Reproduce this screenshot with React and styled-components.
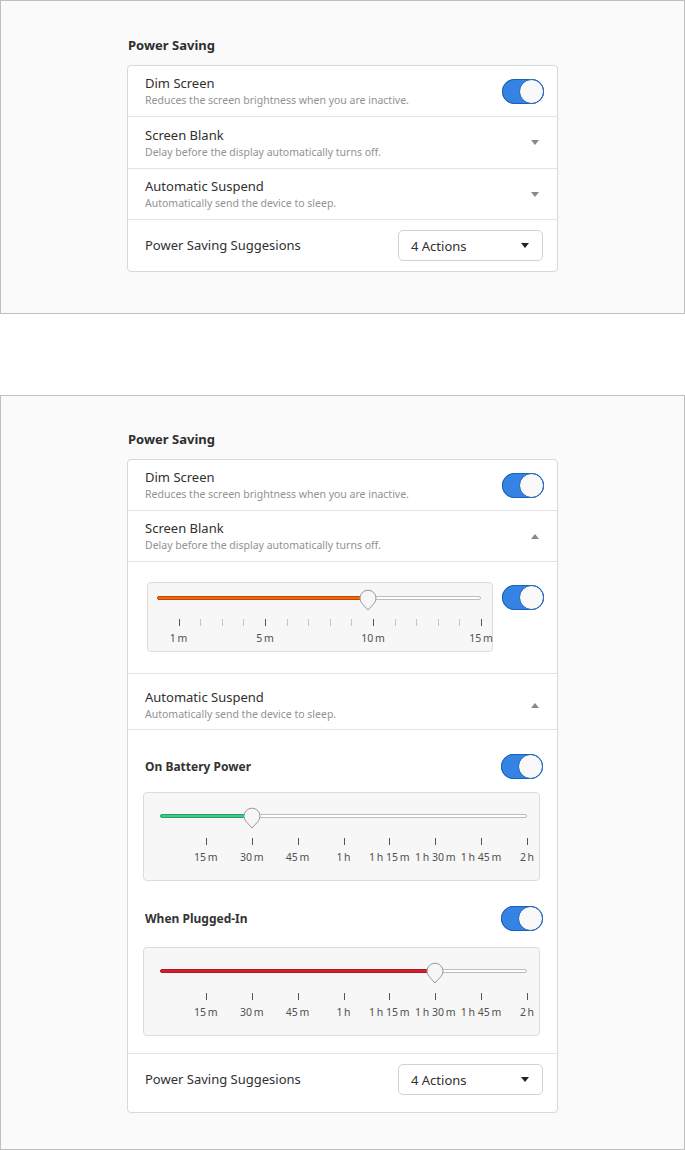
import React from 'react';
import styled, { createGlobalStyle } from 'styled-components';

const Global = createGlobalStyle`
  body {
    margin: 0;
    background: #ffffff;
    font-family: "Noto Sans", "Open Sans", sans-serif;
    color: #303030;
  }
`;

const Frame = styled.section`
  box-sizing: border-box;
  height: ${(p) => p.$height}px;
  margin-top: ${(p) => p.$gap || 0}px;
  padding-top: ${(p) => p.$padTop}px;
  border: 1px solid #bfbfbf;
  background: #fafafa;
`;

const Column = styled.div`
  width: 431px;
  margin: 0 auto;
`;

const Heading = styled.h2`
  margin: 0 0 11px 1px;
  font-size: 13px;
  line-height: 18px;
  font-weight: 700;
  color: #2e2e2e;
`;

const Card = styled.div`
  border: 1px solid #d8d8d8;
  border-radius: 4px;
  background: #ffffff;
`;

const Row = styled.div`
  box-sizing: border-box;
  display: flex;
  align-items: center;
  justify-content: space-between;
  height: ${(p) => p.$height || 51}px;
  padding: ${(p) => p.$padTop || 0}px 13px 0 17px;
  border-bottom: ${(p) => (p.$last ? 'none' : '1px solid #e3e3e3')};
`;

const SuggestRow = styled(Row)`
  align-items: flex-start;
  padding-top: 10px;
  padding-right: 14px;
`;

const Texts = styled.div`
  display: flex;
  flex-direction: column;
`;

const Title = styled.div`
  font-size: 13px;
  line-height: 16px;
  color: #303030;
`;

const Sub = styled.div`
  margin-top: 2px;
  font-size: 10.5px;
  line-height: 14px;
  color: #929292;
`;

const Chevron = styled.span`
  width: 0;
  height: 0;
  margin-right: 5px;
  border-left: 4px solid transparent;
  border-right: 4px solid transparent;
  ${(p) =>
    p.$up ? 'border-bottom: 5px solid #8a8a8a;' : 'border-top: 5px solid #8a8a8a;'}
`;

const ToggleTrack = styled.span`
  box-sizing: border-box;
  flex: none;
  display: flex;
  justify-content: flex-end;
  width: 42px;
  height: 25px;
  border-radius: 13px;
  background: #3584e4;
  box-shadow: inset 0 0 0 1px #1c5fb4;
  margin-top: ${(p) => p.$top || 0}px;
`;

const ToggleKnob = styled.span`
  box-sizing: border-box;
  width: 25px;
  height: 25px;
  border-radius: 50%;
  background: #f9f9f9;
  border: 1px solid #1c5fb4;
`;

const Toggle = ({ top }) => (
  <ToggleTrack $top={top}>
    <ToggleKnob />
  </ToggleTrack>
);

const Dropdown = styled.div`
  box-sizing: border-box;
  display: flex;
  align-items: center;
  justify-content: space-between;
  width: 145px;
  height: 31px;
  padding: 0 13px 0 12px;
  border: 1px solid #d2d2d2;
  border-radius: 5px;
  font-size: 13px;
  color: #303030;
`;

const DropArrow = styled.span`
  width: 0;
  height: 0;
  border-left: 4.5px solid transparent;
  border-right: 4.5px solid transparent;
  border-top: 5px solid #222;
`;

const Expanded = styled.div`
  box-sizing: border-box;
  display: flex;
  align-items: flex-start;
  gap: 9px;
  height: 112px;
  padding: 20px 13px 0 19px;
  border-bottom: 1px solid #e3e3e3;
`;

const Section = styled.div`
  box-sizing: border-box;
  height: 324px;
  padding: 24px 17px 0 15px;
  border-bottom: 1px solid #e3e3e3;
`;

const SubHeader = styled.div`
  display: flex;
  align-items: center;
  justify-content: space-between;
  height: 25px;
  margin: ${(p) => p.$top || 0}px -3px 0 2px;
  font-size: 12px;
  font-weight: 700;
  color: #333;
`;

const SliderBox = styled.div`
  box-sizing: border-box;
  flex: 1;
  margin-top: ${(p) => p.$mt || 0}px;
  padding: ${(p) => p.$pad};
  border: 1px solid #dcdcdc;
  border-radius: 4px;
  background: #f7f7f7;
`;

const TrackArea = styled.div`
  position: relative;
  height: 18px;
`;

const Track = styled.div`
  box-sizing: border-box;
  position: absolute;
  top: 7px;
  left: 0;
  right: 0;
  height: 4px;
  border: 1px solid #bdbdbd;
  border-radius: 2px;
  background: #ffffff;
`;

const Fill = styled.div`
  box-sizing: border-box;
  position: absolute;
  top: 7px;
  left: 0;
  height: 4px;
  border-radius: 2px;
  background: ${(p) => p.$color};
  border: 1px solid ${(p) => p.$edge};
`;

const Knob = styled.svg`
  position: absolute;
  top: 0;
  transform: translateX(-50%);
`;

const TickRow = styled.div`
  position: relative;
  height: 26px;
  margin-top: ${(p) => p.$gap}px;
`;

const Tick = styled.span`
  position: absolute;
  top: 0;
  width: 1px;
  height: 7px;
  background: ${(p) => (p.$major ? '#555' : '#c4c4c4')};
`;

const TickLabel = styled.span`
  position: absolute;
  top: 12px;
  transform: translateX(-50%);
  white-space: nowrap;
  font-size: 10.5px;
  line-height: 14px;
  color: #505050;
`;

const Slider = ({ max, value, color, edge, ticks, pad, gap, mt }) => {
  const pct = (v) => `${(v / max) * 100}%`;
  return (
    <SliderBox $pad={pad} $mt={mt}>
      <TrackArea>
        <Track />
        <Fill $color={color} $edge={edge} style={{ width: pct(value) }} />
        <Knob width="18" height="22" viewBox="0 0 18 22" style={{ left: pct(value) }}>
          <path
            d="M9 21 L3.3 14.8 A8 8 0 1 1 14.7 14.8 Z"
            fill="#f6f6f6"
            stroke="#9a9a9a"
            strokeWidth="1"
          />
        </Knob>
      </TrackArea>
      <TickRow $gap={gap}>
        {ticks.map((t) => (
          <React.Fragment key={t.v}>
            <Tick $major={t.major || !!t.label} style={{ left: pct(t.v) }} />
            {t.label && <TickLabel style={{ left: pct(t.v) }}>{t.label}</TickLabel>}
          </React.Fragment>
        ))}
      </TickRow>
    </SliderBox>
  );
};

const blankTicks = Array.from({ length: 15 }, (_, i) => {
  const v = i + 1;
  const labels = { 1: '1\u2009m', 5: '5\u2009m', 10: '10\u2009m', 15: '15\u2009m' };
  return { v, label: labels[v] };
});

const hourTicks = [
  '15\u2009m',
  '30\u2009m',
  '45\u2009m',
  '1\u2009h',
  '1\u2009h 15\u2009m',
  '1\u2009h 30\u2009m',
  '1\u2009h 45\u2009m',
  '2\u2009h',
].map((label, i) => ({ v: (i + 1) * 15, label }));

const Setting = ({ title, sub, children, ...rest }) => (
  <Row {...rest}>
    <Texts>
      <Title>{title}</Title>
      <Sub>{sub}</Sub>
    </Texts>
    {children}
  </Row>
);

const Suggestions = ({ height }) => (
  <SuggestRow $height={height} $last>
    <Title style={{ marginTop: 7 }}>Power Saving Suggesions</Title>
    <Dropdown>
      4 Actions
      <DropArrow />
    </Dropdown>
  </SuggestRow>
);

const DIM = 'Reduces the screen brightness when you are inactive.';
const BLANK = 'Delay before the display automatically turns off.';
const SUSPEND = 'Automatically send the device to sleep.';

export default function App() {
  return (
    <>
      <Global />
      <Frame $height={314} $padTop={35}>
        <Column>
          <Heading>Power Saving</Heading>
          <Card>
            <Setting title="Dim Screen" sub={DIM}>
              <Toggle />
            </Setting>
            <Setting title="Screen Blank" sub={BLANK} $height={52}>
              <Chevron />
            </Setting>
            <Setting title="Automatic Suspend" sub={SUSPEND}>
              <Chevron />
            </Setting>
            <Suggestions height={51} />
          </Card>
        </Column>
      </Frame>

      <Frame $height={755} $padTop={34} $gap={81}>
        <Column>
          <Heading>Power Saving</Heading>
          <Card>
            <Setting title="Dim Screen" sub={DIM}>
              <Toggle />
            </Setting>
            <Setting title="Screen Blank" sub={BLANK}>
              <Chevron $up />
            </Setting>
            <Expanded>
              <Slider
                max={15}
                value={9.75}
                color="#ed6a0c"
                edge="#c64600"
                ticks={blankTicks}
                pad="6px 11px 6px 9px"
                gap={12}
              />
              <Toggle top={3} />
            </Expanded>
            <Setting title="Automatic Suspend" sub={SUSPEND} $height={56} $padTop={7}>
              <Chevron $up />
            </Setting>
            <Section>
              <SubHeader>
                On Battery Power
                <Toggle />
              </SubHeader>
              <Slider
                max={120}
                value={30}
                color="#33d17a"
                edge="#26a269"
                ticks={hourTicks}
                pad="14px 12px 16px 16px"
                gap={13}
                mt={13}
              />
              <SubHeader $top={25}>
                When Plugged-In
                <Toggle />
              </SubHeader>
              <Slider
                max={120}
                value={90}
                color="#e01b24"
                edge="#a51d2d"
                ticks={hourTicks}
                pad="14px 12px 16px 16px"
                gap={13}
                mt={16}
              />
            </Section>
            <Suggestions height={58} />
          </Card>
        </Column>
      </Frame>
    </>
  );
}
